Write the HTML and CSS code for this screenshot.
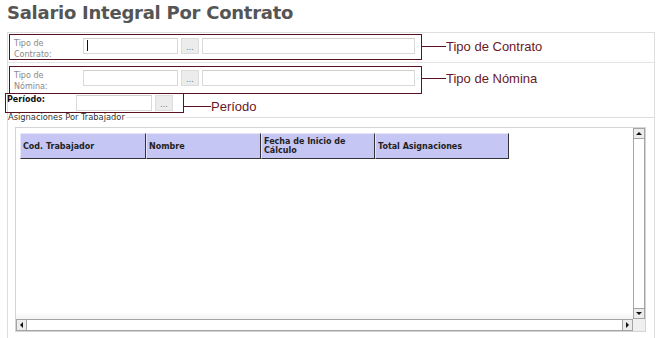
FILE: index.html
```html
<!DOCTYPE html>
<html lang="es">
<head>
    <meta charset="UTF-8">
    <meta name="viewport" content="width=device-width, initial-scale=1.0">
    <title>Salario Integral Por Contrato</title>
    <link rel="stylesheet" href="styles.css">
</head>
<body>
    <h1 class="page-title">Salario Integral Por Contrato</h1>

    <div class="form">
        <!-- Tipo de Contrato -->
        <div class="row row-contrato">
            <div class="callout">
                <label class="field-label">Tipo de<br>Contrato:</label>
                <span class="focus"><input class="code-input" type="text"></span>
                <button class="pick">...</button>
                <input class="desc-input" type="text">
            </div>
            <div class="note"><span class="leader"></span>Tipo de Contrato</div>
        </div>

        <!-- Tipo de Nomina -->
        <div class="row row-nomina">
            <div class="callout">
                <label class="field-label">Tipo de<br>Nómina:</label>
                <input class="code-input" type="text">
                <button class="pick">...</button>
                <input class="desc-input" type="text">
            </div>
            <div class="note"><span class="leader"></span>Tipo de Nómina</div>
        </div>

        <!-- Periodo -->
        <div class="row row-periodo">
            <div class="callout callout-small">
                <label class="field-label field-label-strong">Período:</label>
                <input class="period-input" type="text">
                <button class="pick">...</button>
            </div>
            <div class="note"><span class="leader leader-long"></span>Período</div>
        </div>

        <div class="group-title">
            <span>Asignaciones Por Trabajador</span>
            <span class="group-line"></span>
        </div>

        <div class="grid">
            <div class="grid-body">
                <div class="grid-head">
                    <div class="col col-cod">Cod. Trabajador</div>
                    <div class="col col-nombre">Nombre</div>
                    <div class="col col-fecha">Fecha de Inicio de Cálculo</div>
                    <div class="col col-total">Total Asignaciones</div>
                </div>
            </div>
            <div class="vbar">
                <span class="sb-btn sb-btn-v"><span class="tri tri-up"></span></span>
                <span class="sb-btn sb-btn-v sb-btn-end"><span class="tri tri-down"></span></span>
            </div>
            <div class="hbar">
                <span class="sb-btn sb-btn-h"><span class="tri tri-left"></span></span>
                <span class="sb-btn sb-btn-h sb-btn-end"><span class="tri tri-right"></span></span>
            </div>
            <div class="corner"></div>
        </div>
    </div>
</body>
</html>
```

FILE: styles.css
```css
body {
    margin: 0;
    width: 658px;
    height: 338px;
    overflow: hidden;
    background: #fff;
    font-family: "DejaVu Sans", Verdana, sans-serif;
}
.page-title {
    margin: 0;
    height: 32px;
    box-sizing: border-box;
    padding: 2px 0 0 7px;
    font-size: 18px;
    line-height: 22px;
    letter-spacing: -0.25px;
    font-weight: bold;
    color: #555;
}
.form {
    margin-left: 7px;
    width: 648px;
    height: 306px;
    box-sizing: border-box;
    border: 1px solid #dedede;
    border-bottom: none;
}
.row {
    display: flex;
    align-items: flex-start;
}
.row-contrato {
    height: 29px;
    border-bottom: 1px solid #e4e4e4;
}
.row-nomina {
    height: 30px;
}
.row-periodo {
    height: 19px;
}
.callout {
    display: flex;
    align-items: flex-start;
    box-sizing: border-box;
    width: 413px;
    border: 1px solid #5a1220;
    padding: 0 6px 0 4px;
}
.row-contrato .callout {
    margin: 1px 0 0 1px;
    height: 26px;
    padding-top: 3px;
}
.row-nomina .callout {
    margin: 3px 0 0 1px;
    height: 28px;
    padding-top: 3px;
}
.callout-small {
    width: 179px;
    height: 20px;
    margin-left: -3px;
    padding: 1px 10px 0 1px;
}
.field-label {
    width: 69px;
    font-size: 8px;
    line-height: 11px;
    color: #888;
}
.field-label-strong {
    font-weight: bold;
    line-height: 10px;
    color: #111;
}
.focus {
    position: relative;
    display: flex;
}
.focus::after {
    content: "";
    position: absolute;
    left: 4px;
    top: 2px;
    width: 1px;
    height: 11px;
    background: #111;
}
input {
    margin: 0;
    padding: 0;
    height: 16px;
    box-sizing: border-box;
    border: 1px solid #d9d9d9;
    border-top-color: #cfcfcf;
    background: #fff;
}
.code-input {
    width: 95px;
}
.desc-input {
    width: 213px;
}
.period-input {
    width: 76px;
}
.pick {
    width: 18px;
    height: 16px;
    margin: 0 3px;
    padding: 4px 0 0;
    box-sizing: border-box;
    border: 1px solid #dcdcdc;
    background: #ececec;
    color: #777;
    font-family: "DejaVu Sans", Verdana, sans-serif;
    font-size: 8px;
    line-height: 10px;
}
.callout-small .pick {
    margin-right: 0;
}
.note {
    display: flex;
    align-items: center;
    height: 14px;
    margin-top: 6px;
    font-family: "Liberation Sans", Arial, sans-serif;
    font-size: 13px;
    color: #6a1825;
}
.row-nomina .note {
    margin-top: 8px;
}
.leader {
    width: 24px;
    height: 1px;
    background: #5a1220;
}
.leader-long {
    width: 27px;
}
.group-title {
    display: flex;
    align-items: center;
    height: 9px;
    margin-top: 1px;
    font-size: 8.3px;
    line-height: 9px;
    color: #333;
}
.group-line {
    flex: 1;
    height: 1px;
    margin-left: 1px;
    background: #dddddd;
}
.grid {
    display: grid;
    grid-template-columns: 1fr 12px;
    grid-template-rows: 1fr 12px;
    width: 631px;
    height: 205px;
    margin: 5px 0 0 7px;
    box-sizing: border-box;
    border: 1px solid #d4d4d4;
}
.grid-body {
    padding: 5px 0 0 4px;
    background: linear-gradient(to bottom, #fff 0, #fff 184px, #f2f2f2 191px);
}
.grid-head {
    display: flex;
}
.col {
    display: flex;
    align-items: center;
    height: 26px;
    box-sizing: border-box;
    padding: 0 3px 0 2px;
    border: 1px solid;
    border-color: #e6e6fb #333 #333 #e6e6fb;
    background: #c6c6f5;
    font-size: 8px;
    line-height: 9px;
    font-weight: bold;
    color: #222;
}
.col-cod {
    width: 126px;
}
.col-nombre {
    width: 115px;
}
.col-fecha {
    width: 114px;
}
.col-total {
    width: 134px;
}
.vbar,
.hbar {
    display: flex;
    justify-content: space-between;
    box-sizing: border-box;
    border: 1px solid #a4a4a4;
    background: #fff;
}
.vbar {
    flex-direction: column;
}
.sb-btn {
    display: flex;
    align-items: center;
    justify-content: center;
    background: #ececec;
}
.sb-btn-v {
    height: 9px;
    border-bottom: 1px solid #a4a4a4;
}
.sb-btn-v.sb-btn-end {
    border-bottom: none;
    border-top: 1px solid #a4a4a4;
}
.sb-btn-h {
    width: 9px;
    border-right: 1px solid #a4a4a4;
}
.sb-btn-h.sb-btn-end {
    border-right: none;
    border-left: 1px solid #a4a4a4;
}
.tri {
    width: 0;
    height: 0;
    border: 3px solid transparent;
}
.tri-up {
    border-bottom-color: #111;
    border-top-width: 0;
}
.tri-down {
    border-top-color: #111;
    border-bottom-width: 0;
}
.tri-left {
    border-right-color: #111;
    border-left-width: 0;
}
.tri-right {
    border-left-color: #111;
    border-right-width: 0;
}
.corner {
    background: #f0f0f0;
}
```
